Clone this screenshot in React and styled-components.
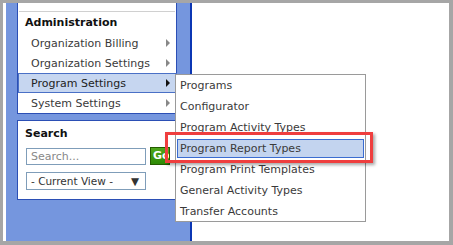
import React from "react";
import styled, { createGlobalStyle } from "styled-components";

const GlobalStyle = createGlobalStyle`
  html, body {
    margin: 0;
    padding: 0;
    background: #fff;
  }
  * { box-sizing: border-box; }
`;

const Frame = styled.div`
  position: relative;
  width: 453px;
  height: 245px;
  display: flex;
  border-style: solid;
  border-color: #a6a6a6;
  border-width: 3px 4px 4px 3px;
  font-family: "DejaVu Sans", Verdana, sans-serif;
  font-size: 11px;
  color: #333;
  overflow: hidden;
`;

const Gutter = styled.div`
  width: 3px;
  background: #fff;
`;

const Sidebar = styled.div`
  width: 186px;
  background: #7596de;
  border-right: 2px solid #0b36b4;
  padding: 0 13px 0 11px;
  display: flex;
  flex-direction: column;
  gap: 6px;
`;

const Content = styled.div`
  flex: 1;
  background: #fff;
`;

const Panel = styled.div`
  background: #fff;
  border: 1px solid #2b4fb5;
  border-top: ${(p) => (p.$open ? "none" : "1px solid #2b4fb5")};
  padding: ${(p) => p.$pad || "0"};
`;

const Rule = styled.div`
  height: 1px;
  margin: 8px 1px 0;
  background: #d0d0d0;
`;

const Heading = styled.div`
  font-weight: bold;
  color: #111;
  height: ${(p) => p.$h || 21}px;
  line-height: ${(p) => p.$h || 21}px;
  padding-left: ${(p) => p.$indent || 7}px;
`;

const MenuRow = styled.div`
  height: 20px;
  display: flex;
  align-items: center;
  justify-content: space-between;
  padding: 0 6px 0 12px;
  margin-right: -1px;
  border: 1px solid ${(p) => (p.$active ? "#4a70c6" : "transparent")};
  background: ${(p) => (p.$active ? "#c6d6f0" : "transparent")};
  color: ${(p) => (p.$active ? "#222" : "#3a3a3a")};
`;

const Arrow = styled.span`
  width: 0;
  height: 0;
  border-top: 4px solid transparent;
  border-bottom: 4px solid transparent;
  border-left: 4px solid ${(p) => (p.$dark ? "#111" : "#888")};
`;

const Field = styled.div`
  display: flex;
  align-items: center;
  gap: 4px;
  padding-left: 8px;
  margin-top: ${(p) => p.$mt || 0}px;
`;

const TextInput = styled.input`
  width: 120px;
  height: 17px;
  border: 1px solid #7f9db9;
  padding: 0 4px;
  font: inherit;
  color: #333;
  &::placeholder { color: #888; }
`;

const GoButton = styled.button`
  width: 20px;
  height: 18px;
  margin-top: -2px;
  padding: 0 0 0 2px;
  border: 1px solid #245c00;
  background: linear-gradient(#4fa81c, #2e8a05);
  color: #fff;
  font: bold 11px "DejaVu Sans", Verdana, sans-serif;
  text-align: left;
  overflow: hidden;
`;

const Select = styled.div`
  width: 120px;
  height: 18px;
  border: 1px solid #7f9db9;
  display: flex;
  align-items: center;
  justify-content: space-between;
  padding: 0 6px 0 4px;
  color: #333;
  font-size: 10.5px;
`;

const Flyout = styled.div`
  position: absolute;
  left: 172px;
  top: 71px;
  width: 191px;
  height: 148px;
  background: #fff;
  border: 1px solid #9a9a9a;
  padding: 0 1px;
`;

const FlyItem = styled.div`
  line-height: ${(p) => (p.$active ? 17 : 21)}px;
  padding-left: ${(p) => (p.$active ? 2 : 3)}px;
  border: ${(p) => (p.$active ? "1px solid #3a6cd0" : "none")};
  background: ${(p) => (p.$active ? "#c3d4ef" : "transparent")};
  margin: ${(p) => (p.$active ? "1px 0" : "0")};
  height: ${(p) => (p.$active ? 19 : 21)}px;
  color: #3a3a3a;
`;

const Callout = styled.div`
  position: absolute;
  left: 162px;
  top: 129px;
  width: 208px;
  height: 31px;
  border: 3px solid #ef3e3e;
  box-shadow: 2px 2px 3px rgba(0, 0, 0, 0.35);
`;

const adminItems = [
  "Organization Billing",
  "Organization Settings",
  "Program Settings",
  "System Settings",
];

const flyItems = [
  "Programs",
  "Configurator",
  "Program Activity Types",
  "Program Report Types",
  "Program Print Templates",
  "General Activity Types",
  "Transfer Accounts",
];

export default function App() {
  return (
    <>
      <GlobalStyle />
      <Frame>
        <Gutter />
        <Sidebar>
          <Panel $open>
            <Rule />
            <Heading>Administration</Heading>
            {adminItems.map((item) => {
              const active = item === "Program Settings";
              return (
                <MenuRow key={item} $active={active}>
                  <span>{item}</span>
                  <Arrow $dark={active} />
                </MenuRow>
              );
            })}
          </Panel>
          <Panel $pad="3px 0 9px">
            <Heading $h={20}>Search</Heading>
            <Field $mt={4}>
              <TextInput placeholder="Search..." />
              <GoButton>Go</GoButton>
            </Field>
            <Field $mt={7}>
              <Select>
                <span>- Current View -</span>
                <span>▼</span>
              </Select>
            </Field>
          </Panel>
        </Sidebar>
        <Content />
        <Flyout>
          {flyItems.map((item) => (
            <FlyItem key={item} $active={item === "Program Report Types"}>
              {item}
            </FlyItem>
          ))}
        </Flyout>
        <Callout />
      </Frame>
    </>
  );
}
